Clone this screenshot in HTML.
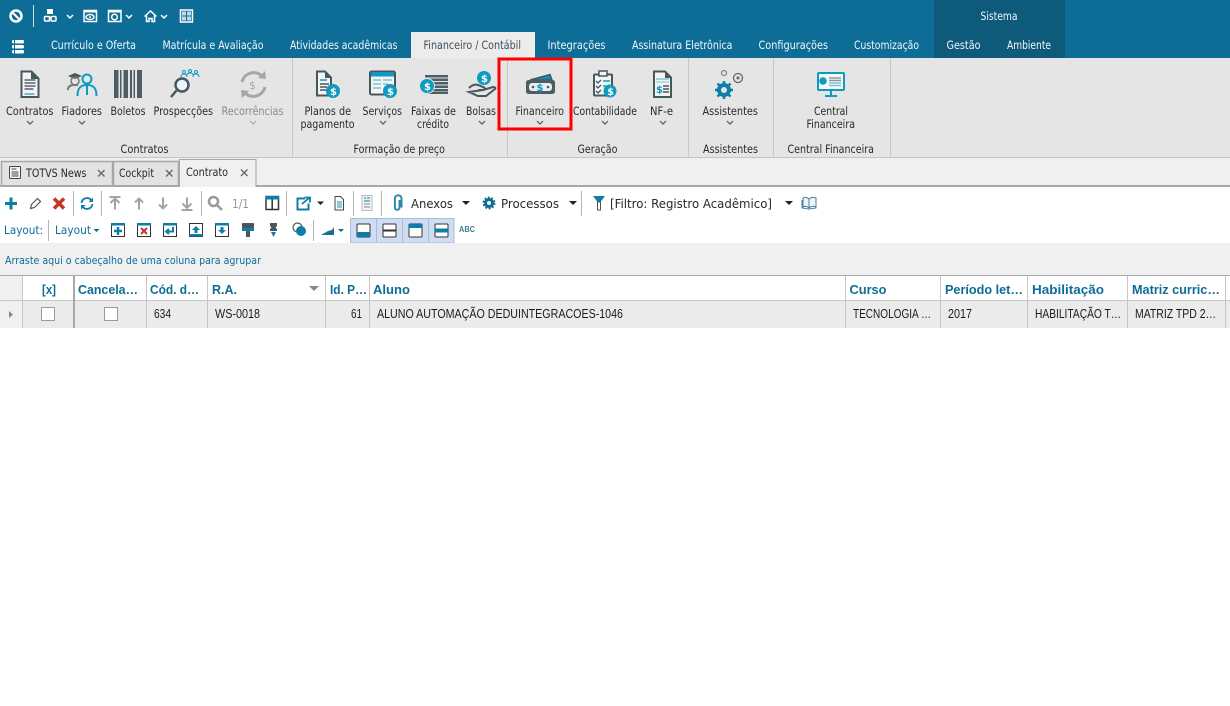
<!DOCTYPE html>
<html><head><meta charset="utf-8"><title>Contrato</title>
<style>
html,body{margin:0;padding:0;background:#fff;width:1230px;height:706px;overflow:hidden}
svg{display:block}
.t{font-family:"DejaVu Sans",sans-serif;font-size:11.5px}
.w{fill:#f2f7fa}
.d{fill:#2a2a2a}
.h{font-family:"Liberation Sans",sans-serif;font-size:13px;font-weight:bold;fill:#0d6d97}
.c{font-family:"Liberation Sans",sans-serif;font-size:12.5px;fill:#1c1c1c}
.i{fill:none;stroke:#47575e;stroke-width:2}
.b{fill:none;stroke:#0d6d97;stroke-width:2}
.q{fill:none;stroke:#fff;stroke-width:1.5}
.ch{fill:none;stroke:#555;stroke-width:1.2}
.g{fill:none;stroke:#a4a4a4;stroke-width:2}
.s{stroke:#b4b4b4;stroke-width:1}
.r{stroke:#c6c6c6;stroke-width:1}
.gl{stroke:#c8c8c8;stroke-width:1}
</style></head><body>
<svg width="1230" height="706" viewBox="0 0 1230 706" xmlns="http://www.w3.org/2000/svg">
<rect width="1230" height="706" fill="#fff"/>
<!-- top -->
<rect width="1230" height="58" fill="#0d6d97"/>
<rect x="934" width="131" height="58" fill="#0e5a7b"/>
<rect x="411" y="32" width="124" height="26" fill="#ececec"/>
<!-- quick access -->
<circle cx="16" cy="16" r="5.5" fill="none" stroke="#fff" stroke-width="2.5"/><path d="M12.5 12.5L20 20" stroke="#fff" stroke-width="2"/>
<line x1="33.5" y1="5" x2="33.5" y2="27" stroke="#cfe0e8"/>
<path d="M47 9h6v5h-6z" fill="#fff"/><rect x="44.500" y="16.500" width="5" height="4.500" class="q" rx="1"/><rect x="51" y="16.500" width="5" height="4.500" class="q" rx="1"/>
<path class="q" d="M67 15l3 3 3-3"/>
<rect x="84" y="10.500" width="12.500" height="11" class="q"/><rect x="84" y="10" width="13" height="2.500" fill="#fff"/><ellipse cx="90" cy="17" rx="4" ry="2.500" class="q" stroke-width="1"/><circle cx="90" cy="17" r="1" fill="#fff"/>
<rect x="108.500" y="10.500" width="12.500" height="11" class="q"/><rect x="108" y="10" width="13" height="2.500" fill="#fff"/><circle cx="114.500" cy="17" r="2.800" class="q" stroke-width="1.200"/>
<path class="q" d="M126 15l3 3 3-3"/>
<path class="q" d="M144.500 16.500l6-5.500 6 5.500M146.500 15.500v6h2.500v-3h3v3h2.500v-6"/>
<path class="q" d="M161 15l3 3 3-3"/>
<rect x="180.500" y="10" width="12" height="12" class="q"/><path d="M182 11.500h4v4h-4zM187 11.500h4v4h-4zM182 16.500h4v4h-4zM187 16.500h4v4h-4z" fill="#fff" opacity=".75"/>
<!-- app menu -->
<rect x="12" y="40" width="12" height="3.500" rx="1.500" fill="#fff"/><rect x="12" y="45" width="12" height="3.500" rx="1.500" fill="#fff"/><rect x="12" y="50" width="12" height="3.500" rx="1.500" fill="#fff"/><path d="M14.500 39v15" stroke="#0d6d97"/>
<!-- tab labels -->
<g class="t w">
<text x="51" y="49" textLength="85" lengthAdjust="spacingAndGlyphs">Currículo e Oferta</text>
<text x="162.500" y="49" textLength="101" lengthAdjust="spacingAndGlyphs">Matrícula e Avaliação</text>
<text x="290" y="49" textLength="107.500" lengthAdjust="spacingAndGlyphs">Atividades acadêmicas</text>
<text x="423.500" y="49" textLength="97.500" lengthAdjust="spacingAndGlyphs" style="fill:#40505a">Financeiro / Contábil</text>
<text x="547.500" y="49" textLength="58" lengthAdjust="spacingAndGlyphs">Integrações</text>
<text x="632" y="49" textLength="100.500" lengthAdjust="spacingAndGlyphs">Assinatura Eletrônica</text>
<text x="758.500" y="49" textLength="69.500" lengthAdjust="spacingAndGlyphs">Configurações</text>
<text x="854" y="49" textLength="65" lengthAdjust="spacingAndGlyphs">Customização</text>
<text x="946.500" y="49" textLength="34" lengthAdjust="spacingAndGlyphs">Gestão</text>
<text x="1007" y="49" textLength="44" lengthAdjust="spacingAndGlyphs">Ambiente</text>
<text x="980.500" y="20" textLength="37" lengthAdjust="spacingAndGlyphs">Sistema</text>
</g>
<!-- ribbon -->
<rect y="58" width="1230" height="99" fill="#e5e5e5"/>
<rect y="157" width="1230" height="1" fill="#c4c4c4"/>
<rect y="158" width="1230" height="28" fill="#f0f0f0"/>
<g class="gl"><line x1="292.500" y1="58" x2="292.500" y2="157"/><line x1="507.500" y1="58" x2="507.500" y2="157"/><line x1="688.500" y1="58" x2="688.500" y2="157"/><line x1="773.500" y1="58" x2="773.500" y2="157"/><line x1="890.500" y1="58" x2="890.500" y2="157"/></g>
<!-- ribbon labels -->
<g class="t d">
<text x="6" y="115" textLength="47.500" lengthAdjust="spacingAndGlyphs">Contratos</text>
<text x="61.500" y="115" textLength="40.500" lengthAdjust="spacingAndGlyphs">Fiadores</text>
<text x="110.500" y="115" textLength="35" lengthAdjust="spacingAndGlyphs">Boletos</text>
<text x="153.500" y="115" textLength="59.500" lengthAdjust="spacingAndGlyphs">Prospecções</text>
<text x="221.500" y="115" textLength="62" lengthAdjust="spacingAndGlyphs" style="fill:#8a8a8a">Recorrências</text>
<text x="304.500" y="115" textLength="46.500" lengthAdjust="spacingAndGlyphs">Planos de</text>
<text x="300.500" y="128" textLength="54" lengthAdjust="spacingAndGlyphs">pagamento</text>
<text x="362.500" y="115" textLength="39.500" lengthAdjust="spacingAndGlyphs">Serviços</text>
<text x="411" y="115" textLength="45" lengthAdjust="spacingAndGlyphs">Faixas de</text>
<text x="417" y="128" textLength="32" lengthAdjust="spacingAndGlyphs">crédito</text>
<text x="466" y="115" textLength="30" lengthAdjust="spacingAndGlyphs">Bolsas</text>
<text x="515.500" y="115" textLength="48.500" lengthAdjust="spacingAndGlyphs">Financeiro</text>
<text x="573" y="115" textLength="64" lengthAdjust="spacingAndGlyphs">Contabilidade</text>
<text x="650" y="115" textLength="23" lengthAdjust="spacingAndGlyphs">NF-e</text>
<text x="702.500" y="115" textLength="55.500" lengthAdjust="spacingAndGlyphs">Assistentes</text>
<text x="814" y="115" textLength="34" lengthAdjust="spacingAndGlyphs">Central</text>
<text x="806.500" y="128" textLength="48.500" lengthAdjust="spacingAndGlyphs">Financeira</text>
<text x="120.500" y="153" textLength="48" lengthAdjust="spacingAndGlyphs">Contratos</text>
<text x="353.500" y="153" textLength="91.500" lengthAdjust="spacingAndGlyphs">Formação de preço</text>
<text x="577.500" y="153" textLength="40" lengthAdjust="spacingAndGlyphs">Geração</text>
<text x="703" y="153" textLength="55" lengthAdjust="spacingAndGlyphs">Assistentes</text>
<text x="787.500" y="153" textLength="86.500" lengthAdjust="spacingAndGlyphs">Central Financeira</text>
</g>
<!-- chevrons -->
<g class="ch">
<path d="M27 121l3 3 3-3"/><path d="M79 121l3 3 3-3"/><path d="M250 121l3 3 3-3" stroke="#aaa"/><path d="M380 121l3 3 3-3"/><path d="M479 121l3 3 3-3"/><path d="M537 121l3 3 3-3"/><path d="M602 121l3 3 3-3"/><path d="M660 121l3 3 3-3"/><path d="M727 121l3 3 3-3"/>
</g>
<!-- ribbon icons -->
<!-- contratos -->
<path d="M21.500 71.500h10l7 7v18.500h-17z" fill="#f4f4f4" stroke="#47575e" stroke-width="2"/><path d="M31 71v8h8z" fill="#47575e"/><path d="M24.500 80h11M24.500 83h11M24.500 86h11M24.500 89h9" stroke="#55656c" stroke-width="1.500"/><path d="M24.500 94h10" stroke="#0f9bc0" stroke-width="1.200"/>
<!-- fiadores -->
<path d="M68 76l7-3 7 3-7 3z" fill="#47575e"/><circle cx="75" cy="81" r="4" fill="none" stroke="#777" stroke-width="1.500"/><path d="M68 90c0-4 3-5 6-5h4" fill="none" stroke="#777" stroke-width="2"/>
<circle cx="87" cy="79" r="4.500" fill="none" stroke="#0f9bc0" stroke-width="2"/><path d="M77.500 96c0-8 3-11 9.500-11s9.500 3 9.500 11" fill="none" stroke="#0f9bc0" stroke-width="2"/><path d="M87 86v9" stroke="#0f9bc0" stroke-width="2"/>
<!-- boletos -->
<g fill="#4e5e65"><rect x="114" y="70" width="4.500" height="28"/><rect x="120" y="70" width="1.500" height="28"/><rect x="123.500" y="70" width="4.500" height="28"/><rect x="130" y="70" width="2" height="28"/><rect x="133.500" y="70" width="1.500" height="28"/><rect x="137" y="70" width="5" height="28"/></g>
<!-- prospeccoes -->
<circle cx="182" cy="85" r="6.500" fill="#eaf6fa" stroke="#47575e" stroke-width="2.500"/><path d="M176.500 90.500l-5.500 6.500" stroke="#47575e" stroke-width="2.500"/>
<g fill="none" stroke="#0f9bc0" stroke-width="1"><circle cx="184" cy="72" r="1.500"/><circle cx="190" cy="71" r="1.500"/><circle cx="196" cy="72" r="1.500"/><path d="M181 77c0-2 1-3 3-3s3 1 3 3M187 75c0-1 1-2 3-2s3 1 3 2M193 77c0-2 1-3 3-3s3 1 3 3"/></g>
<!-- recorrencias -->
<path d="M242 82a12 12 0 0 1 20-6M265 87a12 12 0 0 1-20 6" fill="none" stroke="#a6a6a6" stroke-width="3"/><path d="M258 78l8 1-1-8zM249 91l-8-1 1 8z" fill="#a6a6a6"/><text x="249" y="89" style="font-family:'DejaVu Sans',sans-serif;font-size:11px;fill:#a6a6a6">$</text>
<!-- planos -->
<path d="M317 71.500h8l6 6v18h-14z" fill="#f4f4f4" stroke="#47575e" stroke-width="2"/><path d="M325 71v7h7z" fill="#47575e"/><path d="M320 80h7" stroke="#0f9bc0" stroke-width="1.500"/><path d="M320 84h9M320 87h7M320 90h7" stroke="#47575e" stroke-width="1.500"/>
<circle cx="333" cy="91" r="7" fill="#0f9bc0"/><text x="330" y="95" style="font-family:'DejaVu Sans',sans-serif;font-size:10px;font-weight:bold;fill:#fff">$</text>
<!-- servicos -->
<rect x="370" y="71.500" width="25" height="23" rx="1.500" fill="#f4f4f4" stroke="#47575e" stroke-width="2"/><rect x="371" y="72" width="23" height="4.500" fill="#0f9bc0"/><path d="M373 80h8M373 84h8M373 88h8M383 80h9M383 84h5" stroke="#7cc4da" stroke-width="1.500"/>
<circle cx="390" cy="91" r="7" fill="#0f9bc0"/><text x="387" y="95" style="font-family:'DejaVu Sans',sans-serif;font-size:10px;font-weight:bold;fill:#fff">$</text>
<!-- faixas -->
<g fill="#4e5e65"><rect x="425" y="75" width="23" height="2.500"/><rect x="425" y="78.500" width="23" height="2.500"/><rect x="425" y="82" width="23" height="2.500"/><rect x="425" y="85.500" width="23" height="2.500"/><rect x="425" y="89" width="23" height="2.500"/><rect x="425" y="92" width="23" height="2"/></g>
<circle cx="427" cy="86" r="7.500" fill="#0f9bc0" stroke="#e5e5e5"/><text x="424" y="90" style="font-family:'DejaVu Sans',sans-serif;font-size:10px;font-weight:bold;fill:#fff">$</text>
<!-- bolsas -->
<circle cx="484" cy="78" r="7" fill="#0f9bc0"/><text x="481" y="82" style="font-family:'DejaVu Sans',sans-serif;font-size:10px;font-weight:bold;fill:#fff">$</text>
<path d="M469 88c3-3 6-4 9-3l5 2c3 1 2 3-1 3h-4M483 90l10-3c2 0 3 1 2 2l-9 7h-8l-9-4z" fill="none" stroke="#47575e" stroke-width="2"/>
<!-- financeiro -->
<path d="M530 80l20-5.500 2 5.500z" fill="#0f8fb3" stroke="#47575e" stroke-width="1.500"/>
<rect x="526" y="80" width="29" height="14" rx="2.500" fill="#4d5d64"/><rect x="529" y="83" width="23" height="8" rx="3" fill="#e9eef0"/><text x="536.500" y="91" style="font-family:'DejaVu Sans',sans-serif;font-size:10px;font-weight:bold;fill:#0f9bc0">$</text><circle cx="533" cy="87" r="1.300" fill="#47575e"/><circle cx="548" cy="87" r="1.300" fill="#47575e"/>
<!-- contabilidade -->
<rect x="594" y="74.500" width="18" height="21" rx="1" fill="#f4f4f4" stroke="#47575e" stroke-width="2"/><rect x="599" y="71" width="8" height="5" fill="#f4f4f4" stroke="#47575e" stroke-width="1.500"/><path d="M596 81l2 2 3-3M596 86l2 2 3-3M596 91l2 2 3-3" fill="none" stroke="#47575e" stroke-width="1.300"/><path d="M603 81h7M603 86h4" stroke="#0f9bc0" stroke-width="1.500"/>
<circle cx="610" cy="91" r="6.500" fill="#0f9bc0"/><text x="607.300" y="95" style="font-family:'DejaVu Sans',sans-serif;font-size:9.500px;font-weight:bold;fill:#fff">$</text>
<!-- nf-e -->
<path d="M654 71.500h11l6 6v19.500h-17z" fill="#f4f4f4" stroke="#47575e" stroke-width="2"/><path d="M665 71v7h7z" fill="#47575e"/><path d="M656 79h13" stroke="#7cc4da" stroke-width="1.500"/><path d="M656 82h13" stroke="#7cc4da" stroke-width="1"/><path d="M663 86h6M663 89h6M663 92h6" stroke="#47575e" stroke-width="1.500"/><text x="656" y="93" style="font-family:'DejaVu Sans',sans-serif;font-size:10px;font-weight:bold;fill:#0f9bc0">$</text>
<!-- assistentes -->
<circle cx="724" cy="90" r="5" fill="none" stroke="#0d7fa6" stroke-width="4"/><g stroke="#0d7fa6" stroke-width="2.500"><path d="M724 81v3M724 96v3M715 90h3M730 90h3M717.500 83.500l2 2M728.500 94.500l2 2M730.500 83.500l-2 2M719.500 94.500l-2 2"/></g>
<circle cx="738" cy="78" r="4.500" fill="none" stroke="#666" stroke-width="1.300"/><circle cx="738" cy="78" r="1.500" fill="#666"/>
<circle cx="724" cy="73" r="2.500" fill="none" stroke="#888" stroke-width="1.300"/>
<!-- central -->
<rect x="818" y="73" width="26" height="17" rx="1" fill="#f8f8f8" stroke="#0f9bc0" stroke-width="2"/><path d="M831 90v5M825 96h12" stroke="#0f9bc0" stroke-width="2"/><circle cx="823" cy="81" r="3.800" fill="#0f9bc0"/><path d="M829 78h12M829 80.500h12" stroke="#8a9aa2" stroke-width="1.500"/><path d="M829 83h12M829 85.500h12" stroke="#7cc4da" stroke-width="1.500"/>
<!-- red box -->
<rect x="499" y="59" width="72" height="70" fill="none" stroke="#f00" stroke-width="3"/>
<!-- doc tabs -->
<path d="M1.500 185V161.500H112.500V185" fill="#e3e3e3" stroke="#a6a6a6" stroke-width="1.500"/>
<path d="M113.500 185V161.500H178.500V185" fill="#e3e3e3" stroke="#a6a6a6" stroke-width="1.500"/>
<rect y="185" width="1230" height="2" fill="#a8a8a8"/>
<path d="M179.500 186V159.500H256V186" fill="#f0f0f0" stroke="#a6a6a6" stroke-width="1"/>
<rect x="180" y="184" width="75.500" height="3" fill="#f0f0f0"/>
<rect x="9.500" y="166.500" width="11" height="12" rx="1" fill="#f7f7f7" stroke="#444"/><path d="M11.500 169h5M11.500 172h7M11.500 174h7M11.500 176h7" stroke="#444"/>
<g class="t d">
<text x="26" y="177" textLength="60.500" lengthAdjust="spacingAndGlyphs">TOTVS News</text>
<text x="119" y="177" textLength="35" lengthAdjust="spacingAndGlyphs">Cockpit</text>
<text x="186" y="176" textLength="42" lengthAdjust="spacingAndGlyphs">Contrato</text>
</g>
<g stroke="#666" stroke-width="1.300"><path d="M98 170l6.500 6.500M104.500 170l-6.500 6.500"/><path d="M166 170l6.500 6.500M172.500 170l-6.500 6.500"/><path d="M241 169.500l6.500 6.500M247.500 169.500l-6.500 6.500"/></g>
<!-- toolbar -->
<rect y="187" width="1230" height="56" fill="#fff"/>
<g class="s">
<line x1="73.500" y1="191" x2="73.500" y2="216"/><line x1="101.500" y1="191" x2="101.500" y2="216"/><line x1="201.500" y1="191" x2="201.500" y2="216"/><line x1="286.500" y1="191" x2="286.500" y2="216"/><line x1="353.500" y1="191" x2="353.500" y2="216"/><line x1="381.500" y1="191" x2="381.500" y2="216"/><line x1="581.500" y1="191" x2="581.500" y2="216"/><line x1="48.500" y1="220" x2="48.500" y2="241"/><line x1="313.500" y1="220" x2="313.500" y2="241"/>
</g>
<path d="M11 197.500v12M5 203.500h12" stroke="#0d7fa6" stroke-width="3"/>
<path d="M30.500 208.500l1-4 6-6 3 3-6 6z" fill="#fff" stroke="#555" stroke-width="1.200"/>
<path d="M54 198.500l10 10M64 198.500l-10 10" stroke="#c0392b" stroke-width="3.500"/>
<path d="M81.500 203a5.500 5.500 0 0 1 10-2.500M92.500 204a5.500 5.500 0 0 1-10 2.500" fill="none" stroke="#0d7fa6" stroke-width="1.800"/><path d="M93 197.500v4.500h-4.500zM81 209.500v-4.500h4.500z" fill="#0d7fa6"/>
<g fill="none" stroke="#a4a4a4" stroke-width="2"><path d="M109.500 197h11M115 209.500v-10M110.500 203l4.500-4.500 4.500 4.500"/><path d="M139 209.500v-11M135 202.500l4-4 4 4"/><path d="M163 197.500v11M159 204.500l4 4 4-4"/><path d="M181.500 210h11M187 197.500v10M182.500 203.500l4.500 4.500 4.500-4.500"/></g>
<circle cx="213.500" cy="201.500" r="4.500" fill="none" stroke="#999" stroke-width="2.500"/><path d="M217 205l5 5" stroke="#999" stroke-width="2.500"/>
<text class="t" x="232" y="208" textLength="17" lengthAdjust="spacingAndGlyphs" style="fill:#999;font-size:12px">1/1</text>
<rect x="266" y="196.500" width="12.500" height="13" fill="none" stroke="#333" stroke-width="1.500"/><rect x="265.500" y="196" width="13.500" height="3.500" fill="#0d7fa6"/><path d="M272.200 199v10" stroke="#333" stroke-width="1.500"/>
<path d="M305 198.500h-7.500v11h11v-6" fill="none" stroke="#0d7fa6" stroke-width="2"/><path d="M302 204l7-6M304.500 197.500h5.500v5" fill="none" stroke="#0d7fa6" stroke-width="1.800"/>
<path d="M317 201.500h7l-3.500 3.500z" fill="#222"/>
<path d="M335 196.500h5.500l3 3v10.500h-8.500z" fill="#fff" stroke="#444"/><rect x="337" y="201" width="5" height="7" fill="#8fc7d8"/>
<rect x="362" y="195.500" width="10" height="15" fill="#f4f4f4" stroke="#bbb"/><path d="M364 198h2M367 198h3M364 201h6" stroke="#0d7fa6"/><path d="M364 204h6M364 207h6" stroke="#88a"/>
<path d="M400 200v7.500a2.300 2.300 0 0 1-4.600 0v-9a3.300 3.300 0 0 1 6.600 0v9" fill="none" stroke="#2b8aa8" stroke-width="2" transform="translate(-.5 0)"/>
<g class="t d" style="font-size:12.500px">
<text x="411" y="208" textLength="42" lengthAdjust="spacingAndGlyphs">Anexos</text>
<text x="501" y="208" textLength="58" lengthAdjust="spacingAndGlyphs">Processos</text>
<text x="610" y="208" textLength="162" lengthAdjust="spacingAndGlyphs">[Filtro: Registro Acadêmico]</text>
</g>
<path d="M462 201h8l-4 4z" fill="#222"/><path d="M569 201h8l-4 4z" fill="#222"/><path d="M785 201h8l-4 4z" fill="#222"/>
<circle cx="489" cy="203" r="3.500" fill="none" stroke="#0d6d97" stroke-width="3"/><circle cx="489" cy="203" r="5.500" fill="none" stroke="#0d6d97" stroke-width="1.800" stroke-dasharray="2 1.500"/>
<path d="M593 196h12l-4.500 6h-3z" fill="#0d7fa6"/><path d="M597.500 202h3v8h-3z" fill="#fff" stroke="#555" stroke-width="1"/>
<path d="M803 198c2-1 4-1 6 1v9c-2-2-4-2-6-1zM809 199c2-2 5-2 7-1v9c-2-1-5-1-7 1z" fill="#eef4f8" stroke="#4a7fa0"/><path d="M802 200v8l7 1 7-1v-8" fill="none" stroke="#4a7fa0"/>
<!-- row 2 -->
<g class="t" style="fill:#0d6d97">
<text x="4" y="234" textLength="39" lengthAdjust="spacingAndGlyphs">Layout:</text>
<text x="55" y="234" textLength="36" lengthAdjust="spacingAndGlyphs">Layout</text>
</g>
<path d="M93.500 229h6l-3 3z" fill="#0d6d97"/><path d="M338 229h6l-3 3z" fill="#0d6d97"/>
<rect x="111.500" y="223.500" width="13" height="13" fill="#fff" stroke="#333"/><rect x="111" y="223" width="14" height="2.500" fill="#0d7fa6"/><path d="M118 227v8M114 231h8" stroke="#0d7fa6" stroke-width="2.500"/>
<rect x="137.500" y="223.500" width="13" height="13" fill="#fff" stroke="#333"/><rect x="137" y="223" width="14" height="2.500" fill="#0d7fa6"/><path d="M141 228l6 6M147 228l-6 6" stroke="#c0392b" stroke-width="2"/>
<rect x="163.500" y="223.500" width="13" height="13" fill="#fff" stroke="#333"/><rect x="163" y="223" width="14" height="2.500" fill="#0d7fa6"/><path d="M173 227v4.500h-6M169 229l-3 2.500 3 2.500" fill="none" stroke="#0d7fa6" stroke-width="2"/>
<rect x="189.500" y="223.500" width="13" height="13" fill="#fff" stroke="#333"/><path d="M196 226l-4 4h2.500v3h3v-3h2.500z" fill="#0d7fa6"/><rect x="189" y="234" width="14" height="2.500" fill="#0d7fa6"/>
<rect x="215.500" y="223.500" width="13" height="13" fill="#fff" stroke="#333"/><rect x="215" y="223" width="14" height="2.500" fill="#0d7fa6"/><path d="M222 234l-4-4h2.500v-3h3v3h2.500z" fill="#0d7fa6"/>
<rect x="242" y="223" width="12" height="5" rx="1" fill="#47575e"/><rect x="242" y="228" width="12" height="3" fill="#0d7fa6"/><rect x="246" y="231" width="4" height="6" fill="#47575e"/>
<path d="M270 223h7v3l-1.500 1.500 1.500 1.500v2h-7v-2l1.500-1.500-1.500-1.500z" fill="#47575e"/><path d="M271 232h5l-2.500 5z" fill="#0d7fa6"/>
<circle cx="297.500" cy="227.500" r="4.500" fill="#fff" stroke="#555" stroke-width="1.200"/><circle cx="301" cy="231" r="5" fill="#0d7fa6"/>
<path d="M321 235l7-4 4-1 2-3v8z" fill="#1a6f90"/>
<rect x="350.500" y="218.500" width="26" height="24.500" fill="#cfdcf2" stroke="#a9bcd8"/><rect x="376.500" y="218.500" width="26" height="24.500" fill="#cfdcf2" stroke="#a9bcd8"/><rect x="402.500" y="218.500" width="26" height="24.500" fill="#cfdcf2" stroke="#a9bcd8"/><rect x="428.500" y="218.500" width="25.500" height="24.500" fill="#cfdcf2" stroke="#a9bcd8"/>
<rect x="357" y="224" width="13" height="13" rx="1" fill="#fff" stroke="#333"/><rect x="357" y="232" width="13" height="5" fill="#0d7fa6"/>
<rect x="383" y="224" width="13" height="13" rx="1" fill="#fff" stroke="#333"/><path d="M383 230.500h13" stroke="#333" stroke-width="2"/>
<rect x="409" y="224" width="13" height="13" rx="1" fill="#fff" stroke="#333"/><rect x="409" y="224" width="13" height="4" fill="#0d7fa6"/>
<rect x="435" y="224" width="13" height="13" rx="1" fill="#fff" stroke="#333"/><rect x="435" y="228.500" width="13" height="4" fill="#0d7fa6"/>
<text x="459" y="232" textLength="16" lengthAdjust="spacingAndGlyphs" style="font-family:'Liberation Sans',sans-serif;font-size:8px;font-weight:bold;fill:#3f7f98">ABC</text>
<!-- group band -->
<rect y="243" width="1230" height="32" fill="#f0f0f0"/>
<text class="t" x="5" y="264" textLength="256" lengthAdjust="spacingAndGlyphs" style="fill:#0d6d97;font-size:11px">Arraste aqui o cabeçalho de uma coluna para agrupar</text>
<!-- grid -->
<rect y="275" width="1230" height="1" fill="#a8a8a8"/>
<rect y="276" width="1230" height="24" fill="#fff"/>
<rect y="276" width="23" height="52" fill="#f0f0f0"/>
<rect x="23" y="301" width="1207" height="27" fill="#ebebeb"/>
<rect y="300" width="1230" height="1" fill="#c6c6c6"/>
<g class="r">
<line x1="22.500" y1="276" x2="22.500" y2="328"/><line x1="146.500" y1="276" x2="146.500" y2="328"/><line x1="207.500" y1="276" x2="207.500" y2="328"/><line x1="325.500" y1="276" x2="325.500" y2="328"/><line x1="369.500" y1="276" x2="369.500" y2="328"/><line x1="845.500" y1="276" x2="845.500" y2="328"/><line x1="940.500" y1="276" x2="940.500" y2="328"/><line x1="1027.500" y1="276" x2="1027.500" y2="328"/><line x1="1127.500" y1="276" x2="1127.500" y2="328"/><line x1="1225.500" y1="276" x2="1225.500" y2="328"/>
</g>
<rect x="73" y="276" width="2" height="52" fill="#a8a8a8"/>
<g class="h">
<text x="42" y="294" textLength="14" lengthAdjust="spacingAndGlyphs">[x]</text>
<text x="78" y="294" textLength="60" lengthAdjust="spacingAndGlyphs">Cancela…</text>
<text x="150" y="294" textLength="49" lengthAdjust="spacingAndGlyphs">Cód. d…</text>
<text x="212" y="294" textLength="25" lengthAdjust="spacingAndGlyphs">R.A.</text>
<text x="330" y="294" textLength="37" lengthAdjust="spacingAndGlyphs">Id. P…</text>
<text x="373" y="294" textLength="37" lengthAdjust="spacingAndGlyphs">Aluno</text>
<text x="849.500" y="294" textLength="37" lengthAdjust="spacingAndGlyphs">Curso</text>
<text x="945" y="294" textLength="78" lengthAdjust="spacingAndGlyphs">Período let…</text>
<text x="1032" y="294" textLength="72" lengthAdjust="spacingAndGlyphs">Habilitação</text>
<text x="1132" y="294" textLength="88" lengthAdjust="spacingAndGlyphs">Matriz curric…</text>
</g>
<path d="M309 286h10l-5 5z" fill="#888"/>
<path d="M9 311l4 3.500-4 3.500z" fill="#888"/>
<rect x="41.500" y="307.500" width="13" height="13" fill="#fff" stroke="#999"/>
<rect x="104.500" y="307.500" width="13" height="13" fill="#fff" stroke="#999"/>
<g class="c">
<text x="154" y="318" textLength="17" lengthAdjust="spacingAndGlyphs">634</text>
<text x="215" y="318" textLength="45" lengthAdjust="spacingAndGlyphs">WS-0018</text>
<text x="351" y="318" textLength="11" lengthAdjust="spacingAndGlyphs">61</text>
<text x="377" y="318" textLength="246" lengthAdjust="spacingAndGlyphs">ALUNO AUTOMAÇÃO DEDUINTEGRACOES-1046</text>
<text x="853" y="318" textLength="78" lengthAdjust="spacingAndGlyphs">TECNOLOGIA …</text>
<text x="948" y="318" textLength="24" lengthAdjust="spacingAndGlyphs">2017</text>
<text x="1035" y="318" textLength="86" lengthAdjust="spacingAndGlyphs">HABILITAÇÃO T…</text>
<text x="1135" y="318" textLength="81" lengthAdjust="spacingAndGlyphs">MATRIZ TPD 2…</text>
</g>
</svg>
</body></html>
